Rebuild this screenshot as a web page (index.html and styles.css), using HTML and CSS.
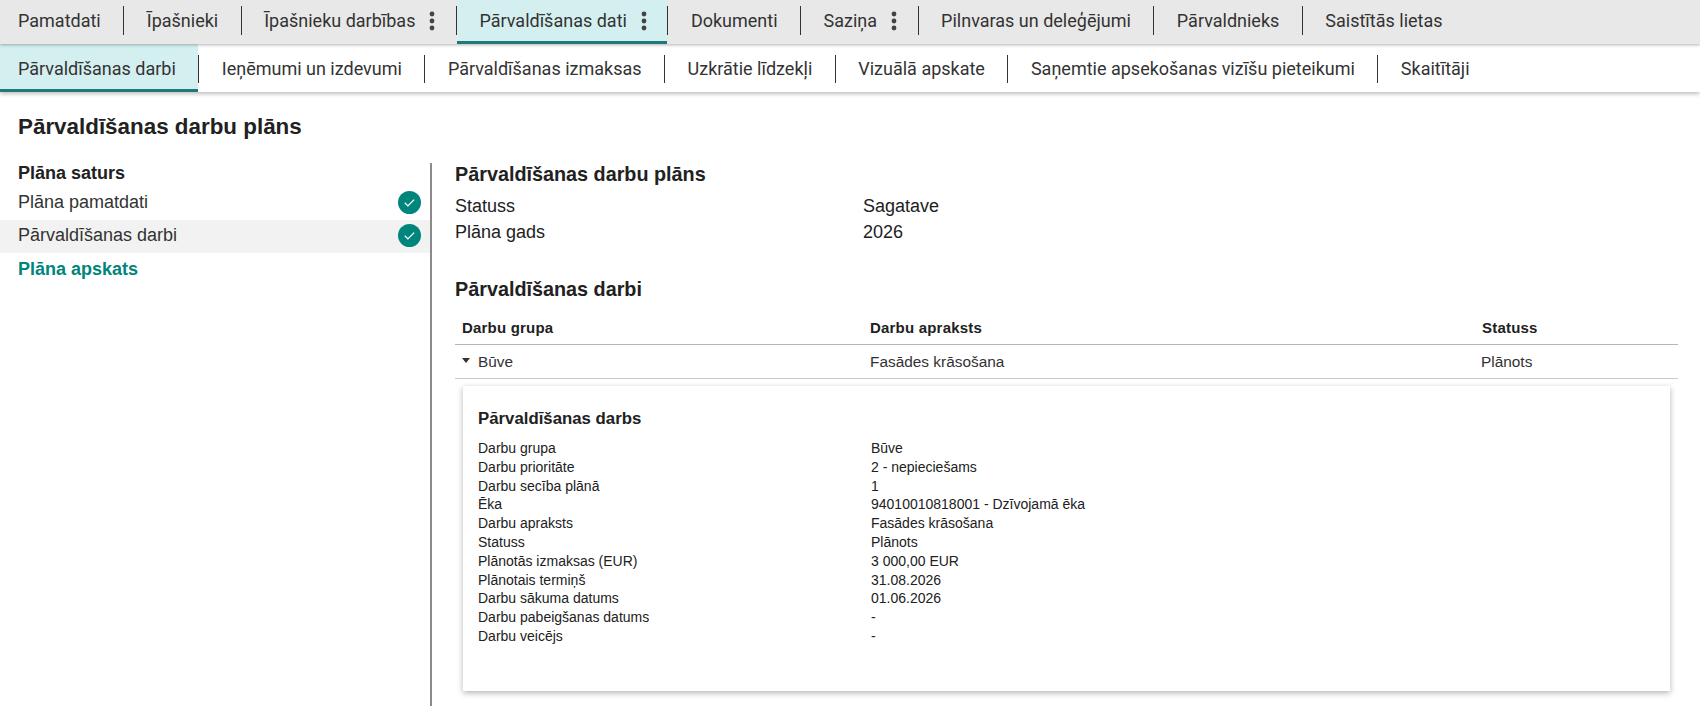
FILE: index.html
```html
<!DOCTYPE html>
<html lang="lv">
<head>
<meta charset="utf-8">
<title>Pārvaldīšanas darbu plāns</title>
<link rel="stylesheet" href="styles.css">
</head>
<body>
<nav class="tabs tabs-top">
  <a class="tab tab-first">Pamatdati</a><i class="sep"></i>
  <a class="tab">Īpašnieki</a><i class="sep"></i>
  <a class="tab tab-menu">Īpašnieku darbības<svg class="dots" viewBox="0 0 6 20"><circle cx="3" cy="3" r="2.4"/><circle cx="3" cy="10" r="2.4"/><circle cx="3" cy="17" r="2.4"/></svg></a><i class="sep"></i>
  <a class="tab tab-menu active">Pārvaldīšanas dati<svg class="dots" viewBox="0 0 6 20"><circle cx="3" cy="3" r="2.4"/><circle cx="3" cy="10" r="2.4"/><circle cx="3" cy="17" r="2.4"/></svg></a><i class="sep"></i>
  <a class="tab">Dokumenti</a><i class="sep"></i>
  <a class="tab tab-menu">Saziņa<svg class="dots" viewBox="0 0 6 20"><circle cx="3" cy="3" r="2.4"/><circle cx="3" cy="10" r="2.4"/><circle cx="3" cy="17" r="2.4"/></svg></a><i class="sep"></i>
  <a class="tab">Pilnvaras un deleģējumi</a><i class="sep"></i>
  <a class="tab">Pārvaldnieks</a><i class="sep"></i>
  <a class="tab">Saistītās lietas</a>
</nav>
<nav class="tabs tabs-sub">
  <a class="tab tab-first active">Pārvaldīšanas darbi</a><i class="sep"></i>
  <a class="tab">Ieņēmumi un izdevumi</a><i class="sep"></i>
  <a class="tab">Pārvaldīšanas izmaksas</a><i class="sep"></i>
  <a class="tab">Uzkrātie līdzekļi</a><i class="sep"></i>
  <a class="tab">Vizuālā apskate</a><i class="sep"></i>
  <a class="tab">Saņemtie apsekošanas vizīšu pieteikumi</a><i class="sep"></i>
  <a class="tab">Skaitītāji</a>
</nav>
<h1 class="page-title">Pārvaldīšanas darbu plāns</h1>
<div class="layout">
  <aside class="side">
    <div class="side-title">Plāna saturs</div>
    <div class="side-row"><span>Plāna pamatdati</span><svg class="check" viewBox="0 0 23 23"><circle cx="11.5" cy="11.5" r="11.5"/><path d="M6.8 11.8l3.1 3.1 6.3-6.3"/></svg></div>
    <div class="side-row side-row-current"><span>Pārvaldīšanas darbi</span><svg class="check" viewBox="0 0 23 23"><circle cx="11.5" cy="11.5" r="11.5"/><path d="M6.8 11.8l3.1 3.1 6.3-6.3"/></svg></div>
    <div class="side-link">Plāna apskats</div>
  </aside>
  <main class="content">
    <h2 class="section-title">Pārvaldīšanas darbu plāns</h2>
    <dl class="facts">
      <dt>Statuss</dt><dd>Sagatave</dd>
      <dt>Plāna gads</dt><dd>2026</dd>
    </dl>
    <h2 class="section-title section-title-second">Pārvaldīšanas darbi</h2>
    <div class="table-row table-head">
      <div>Darbu grupa</div><div>Darbu apraksts</div><div>Statuss</div>
    </div>
    <div class="table-row table-body">
      <div class="expander"><svg class="caret" viewBox="0 0 8 5"><path d="M0 0h8L4 5z"/></svg>Būve</div><div>Fasādes krāsošana</div><div class="status-cell">Plānots</div>
    </div>
    <section class="card">
      <h3 class="card-title">Pārvaldīšanas darbs</h3>
      <dl class="card-list">
        <dt>Darbu grupa</dt><dd>Būve</dd>
        <dt>Darbu prioritāte</dt><dd>2 - nepieciešams</dd>
        <dt>Darbu secība plānā</dt><dd>1</dd>
        <dt>Ēka</dt><dd>94010010818001 - Dzīvojamā ēka</dd>
        <dt>Darbu apraksts</dt><dd>Fasādes krāsošana</dd>
        <dt>Statuss</dt><dd>Plānots</dd>
        <dt>Plānotās izmaksas (EUR)</dt><dd>3 000,00 EUR</dd>
        <dt>Plānotais termiņš</dt><dd>31.08.2026</dd>
        <dt>Darbu sākuma datums</dt><dd>01.06.2026</dd>
        <dt>Darbu pabeigšanas datums</dt><dd>-</dd>
        <dt>Darbu veicējs</dt><dd>-</dd>
      </dl>
    </section>
  </main>
</div>
</body>
</html>
```
FILE: styles.css
```css
* { box-sizing: border-box; }
html, body { margin: 0; height: 100%; overflow: hidden; }
body { background: #fff; color: #212121; font-family: "Liberation Sans", Arial, sans-serif; }

.tabs { display: flex; align-items: center; font-family: Roboto, sans-serif; font-size: 18px; color: #333; }
.tabs-top { height: 44px; background: #e8e8e8; box-shadow: 0 1px 3px rgba(0,0,0,.3); position: relative; }
.tabs-sub { height: 48px; background: #fff; box-shadow: 0 2px 4px rgba(0,0,0,.25); }
.tab { height: 100%; display: flex; align-items: center; padding: 0 22.5px; border-bottom: 3px solid transparent; white-space: nowrap; }
.tabs-sub .tab { padding-top: 4px; }
.tab-first { padding-left: 18px; }
.tab-menu { padding-right: 20.5px; }
.tab.active { background: #d4eff0; border-bottom-color: #1f7a77; }
.sep { flex: none; width: 1px; height: 29px; background: #333; margin-bottom: 3px; }
.tabs-sub .sep { height: 28px; margin: 2px 0 0; }
.dots { width: 6px; height: 20px; margin-left: 14px; fill: #444; }

.page-title { margin: 22px 0 0 18px; font-size: 22.4px; line-height: 26px; font-weight: 700; }
.layout { display: flex; margin-top: 23px; height: 543px; }
.side { flex: none; width: 432px; border-right: 2px solid #8a8a8a; font-size: 18px; }
.side-title { padding: 0 0 4px 18px; font-weight: 700; line-height: 20px; }
.side-row { height: 33px; display: flex; align-items: center; justify-content: space-between; padding: 0 9px 2px 18px; color: #333; }
.side-row-current { background: #f2f2f2; }
.side-link { padding-left: 18px; margin-top: 6px; line-height: 20px; font-weight: 700; color: #00857d; }
.check { width: 23px; height: 23px; }
.check circle { fill: #00857d; }
.check path { fill: none; stroke: #fff; stroke-width: 1.3; }

.content { flex: 1; padding: 0 22px 0 23px; min-width: 0; }
.section-title { margin: 0; font-size: 19.8px; line-height: 22px; font-weight: 700; }
.section-title-second { margin-top: 33px; }
.facts { display: grid; grid-template-columns: 408px 1fr; margin: 8px 0 0; font-size: 18px; line-height: 26px; }
.facts dt, .facts dd { margin: 0; }

.table-row { display: grid; grid-template-columns: 408px 612px 1fr; padding-left: 7px; }
.table-head { margin-top: 12px; height: 33px; padding-bottom: 1px; align-items: center; font-size: 15px; font-weight: 700; border-bottom: 1px solid #b5b5b5; letter-spacing: .2px; }
.table-body { height: 34px; align-items: center; font-size: 15.4px; border-bottom: 1px solid #ccc; color: #333; }
.status-cell { margin-left: -1px; }
.expander { display: flex; align-items: center; }
.caret { width: 8px; height: 5px; margin-right: 8px; fill: #333; margin-top: -3px; }

.card { margin: 7px 8px 0; height: 305px; padding: 23px 15px; background: #fff; box-shadow: 0 2px 6px rgba(0,0,0,.3); }
.card-title { margin: 0; font-size: 16.8px; line-height: 20px; font-weight: 700; }
.card-list { display: grid; grid-template-columns: 393px 1fr; margin: 10px 0 0; font-size: 14px; line-height: 18.8px; }
.card-list dt, .card-list dd { margin: 0; }
```
